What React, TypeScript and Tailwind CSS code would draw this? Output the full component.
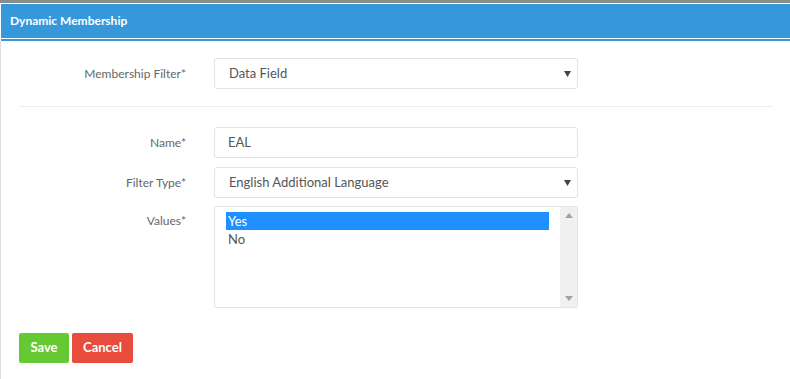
const Arrow = () => (
  <svg width="7" height="6" viewBox="0 0 7 6" className="absolute right-[6px] top-1/2 -translate-y-1/2">
    <path d="M0 0H7L3.5 6Z" fill="#444" />
  </svg>
);

const Label = ({ children }: { children: string }) => (
  <div className="w-[168px] text-right text-[12px] text-[#666] pr-px">{children}</div>
);

const App = () => {
  return (
    <div className="w-[790px] h-[379px] bg-white overflow-hidden font-['Lato',sans-serif] text-[#555]">
      <div className="h-[3px] bg-[#8c8c8c]" />
      <div className="border-t border-white border-l border-l-white">
        <div className="h-[34px] bg-[#3498db] flex items-center pl-[9px] text-[12px] font-bold text-white">
          Dynamic Membership
        </div>
        <div className="h-px bg-white" />
        <div className="h-[2px] bg-[#3498db]" />
      </div>
      <div className="border-l border-[#ddd] h-full pl-[18px] pr-[17px] pt-[17px]">
        <div className="flex items-center gap-[27px]">
          <Label>Membership Filter*</Label>
          <div className="relative w-[364px] h-[31px] border border-[#e3e3e3] rounded-[3px] flex items-center pl-[14px] text-[13px]">
            Data Field
            <Arrow />
          </div>
        </div>
        <div className="mt-[17px] h-px bg-[#eee]" />
        <div className="mt-[20px] flex flex-col gap-[9px]">
          <div className="flex items-center gap-[27px]">
            <Label>Name*</Label>
            <div className="w-[364px] h-[31px] border border-[#e3e3e3] rounded-[3px] flex items-center pl-[13px] text-[13px]">
              EAL
            </div>
          </div>
          <div className="flex items-center gap-[27px]">
            <Label>Filter Type*</Label>
            <div className="relative w-[364px] h-[31px] border border-[#e3e3e3] rounded-[3px] flex items-center pl-[14px] text-[13px]">
              English Additional Language
              <Arrow />
            </div>
          </div>
          <div className="flex items-start gap-[27px] -mt-[1px]">
            <div className="pt-[6px]">
              <Label>Values*</Label>
            </div>
            <div className="w-[364px] h-[102px] border border-[#e3e3e3] rounded-[2px] flex text-[13px]">
              <div className="flex-1 pl-[11px] pr-[11px] pt-[5px]">
                <div className="h-[18px] bg-[#1e90ff] text-white pl-[2px] leading-[18px]">Yes</div>
                <div className="h-[18px] pl-[2px] leading-[18px]">No</div>
              </div>
              <div className="w-[17px] bg-[#f0f0f0] flex flex-col items-center justify-between py-[6px]">
                <svg width="8" height="5" viewBox="0 0 8 5">
                  <path d="M0 5H8L4 0Z" fill="#a3a3a3" />
                </svg>
                <svg width="8" height="5" viewBox="0 0 8 5">
                  <path d="M0 0H8L4 5Z" fill="#a3a3a3" />
                </svg>
              </div>
            </div>
          </div>
        </div>
        <div className="mt-[25px] flex gap-[3px]">
          <button className="w-[50px] h-[30px] rounded-[2px] bg-[#65c934] text-white font-bold text-[13px]">Save</button>
          <button className="w-[61px] h-[30px] rounded-[2px] bg-[#e74c3c] text-white font-bold text-[13px]">Cancel</button>
        </div>
      </div>
    </div>
  );
};

export default App;
